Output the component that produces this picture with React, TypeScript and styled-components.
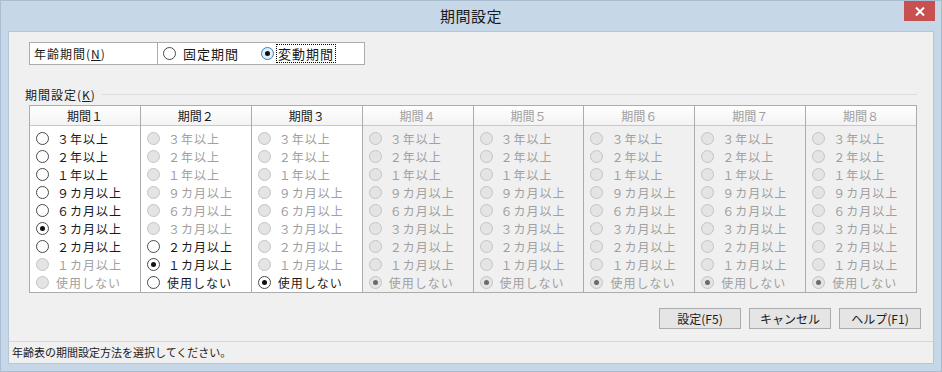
import React from 'react';
import styled, { createGlobalStyle } from 'styled-components';

const GlobalStyle = createGlobalStyle`
  html, body {
    margin: 0;
    padding: 0;
    background: #c6d7e7;
  }

  body {
    font-family: 'Noto Sans CJK JP', 'Noto Sans', sans-serif;
    color: #1a1a1a;
  }
`;

const Window = styled.div`
  display: flex;
  flex-direction: column;
  width: 942px;
  height: 372px;
  box-sizing: border-box;
  background-color: #c6d7e7;
  border: 1px solid #a8bdd2;
`;

const TitleBar = styled.div`
  display: grid;
  grid-template-columns: 1fr auto 1fr;
  height: 30px;
  flex: 0 0 auto;
`;

const Title = styled.div`
  grid-column: 2;
  font-size: 15px;
  line-height: 30px;
  letter-spacing: 0.5px;
`;

const TitleControls = styled.div`
  grid-column: 3;
  display: flex;
  justify-content: flex-end;
  align-items: flex-start;
  padding-right: 6px;
`;

const CloseButton = styled.div`
  display: flex;
  align-items: center;
  justify-content: center;
  width: 31px;
  height: 20px;
  background-color: #c75050;
`;

const Client = styled.div`
  flex: 1 1 auto;
  display: flex;
  flex-direction: column;
  margin: 0 7px 7px 7px;
  background-color: #f0f0f0;
  border: 1px solid #b4c6d8;
`;

const Content = styled.div`
  flex: 1 1 auto;
  display: flex;
  flex-direction: column;
  padding: 10px 16px 0 20px;
`;

const ModeBox = styled.div`
  display: flex;
  width: 336px;
  height: 23px;
  box-sizing: border-box;
  border: 1px solid #acacac;
  background-color: #ffffff;
`;

const ModeLabel = styled.div`
  width: 123px;
  padding-left: 4px;
  border-right: 1px solid #acacac;
  font-size: 12px;
  line-height: 21px;
  letter-spacing: 1px;
`;

const ModeOptions = styled.div`
  display: flex;
  align-items: center;
  padding-left: 5px;
  gap: 21px;
`;

const Option = styled.label<{ $disabled?: boolean; $gap?: number }>`
  display: flex;
  align-items: center;
  gap: ${(p) => p.$gap ?? 6}px;
  color: ${(p) => (p.$disabled ? '#a0a0a0' : '#1a1a1a')};
  white-space: nowrap;
`;

const OptionText = styled.span<{ $focus?: boolean; $size?: number }>`
  font-size: ${(p) => p.$size ?? 12}px;
  line-height: 17px;
  letter-spacing: 1px;
  padding: 0 1px;
  outline: ${(p) => (p.$focus ? '1px dotted #000000' : 'none')};
`;

const RadioMark = styled.span<{ $checked?: boolean; $disabled?: boolean; $focus?: boolean }>`
  position: relative;
  display: inline-block;
  flex: 0 0 auto;
  width: 13px;
  height: 13px;
  box-sizing: border-box;
  border-radius: 50%;
  border: 1px solid
    ${(p) => (p.$focus ? '#3c7fb1' : p.$disabled ? '#c4c4c4' : '#4a4a4a')};
  background-color: ${(p) => (p.$focus ? '#e3eef9' : p.$disabled ? '#e4e4e4' : '#ffffff')};

  &::after {
    content: '';
    display: ${(p) => (p.$checked ? 'block' : 'none')};
    position: absolute;
    left: 3px;
    top: 3px;
    width: 5px;
    height: 5px;
    border-radius: 50%;
    background-color: ${(p) => (p.$disabled ? '#6a6a6a' : '#111111')};
  }
`;

const GroupHeader = styled.div`
  display: flex;
  align-items: center;
  gap: 6px;
  margin: 22px 0 0 -4px;
  height: 15px;
`;

const GroupLabel = styled.span`
  font-size: 12px;
  line-height: 15px;
  letter-spacing: 1px;
`;

const GroupRule = styled.div`
  flex: 1 1 auto;
  height: 1px;
  margin-top: -1px;
  background-color: #dcdcdc;
`;

const Table = styled.div`
  display: flex;
  width: 888px;
  height: 188px;
  box-sizing: border-box;
  margin-top: 3px;
  border: 1px solid #acacac;
`;

const Column = styled.div<{ $disabled?: boolean }>`
  flex: 1 1 0;
  display: flex;
  flex-direction: column;
  border-right: 1px solid #acacac;
  background-color: ${(p) => (p.$disabled ? '#f0f0f0' : '#ffffff')};

  &:last-child {
    border-right: none;
  }
`;

const ColumnHead = styled.div<{ $disabled?: boolean }>`
  height: 19px;
  border-bottom: 1px solid #c8c8c8;
  background: linear-gradient(#ffffff, #f3f3f3);
  text-align: center;
  font-size: 12px;
  line-height: 19px;
  color: ${(p) => (p.$disabled ? '#a0a0a0' : '#1a1a1a')};
`;

const ColumnBody = styled.div`
  display: flex;
  flex-direction: column;
  padding: 3px 0 0 6px;
`;

const Row = styled.div`
  height: 18px;
  display: flex;
  align-items: center;
`;

const ButtonRow = styled.div`
  display: flex;
  justify-content: flex-end;
  gap: 8px;
  margin-top: 15px;
  width: 892px;
`;

const Button = styled.button`
  width: 82px;
  height: 21px;
  padding: 0;
  border: 1px solid #acacac;
  background-color: #e5e5e5;
  font-family: inherit;
  font-size: 12px;
  line-height: 19px;
  color: #1a1a1a;
`;

const StatusBar = styled.div`
  flex: 0 0 auto;
  height: 21px;
  border-top: 1px solid #d7d7d7;
  padding-left: 3px;
  font-size: 11px;
  line-height: 21px;
`;

type State = 'on' | 'off' | 'dis' | 'dison';

const labels = [
  '３年以上',
  '２年以上',
  '１年以上',
  '９カ月以上',
  '６カ月以上',
  '３カ月以上',
  '２カ月以上',
  '１カ月以上',
  '使用しない',
];

const disabledColumn: State[] = ['dis', 'dis', 'dis', 'dis', 'dis', 'dis', 'dis', 'dis', 'dison'];

const periods: { name: string; disabled: boolean; states: State[] }[] = [
  { name: '期間１', disabled: false, states: ['off', 'off', 'off', 'off', 'off', 'on', 'off', 'dis', 'dis'] },
  { name: '期間２', disabled: false, states: ['dis', 'dis', 'dis', 'dis', 'dis', 'dis', 'off', 'on', 'off'] },
  { name: '期間３', disabled: false, states: ['dis', 'dis', 'dis', 'dis', 'dis', 'dis', 'dis', 'dis', 'on'] },
  { name: '期間４', disabled: true, states: disabledColumn },
  { name: '期間５', disabled: true, states: disabledColumn },
  { name: '期間６', disabled: true, states: disabledColumn },
  { name: '期間７', disabled: true, states: disabledColumn },
  { name: '期間８', disabled: true, states: disabledColumn },
];

const PeriodColumn = ({ name, disabled, states }: { name: string; disabled: boolean; states: State[] }) => (
  <Column $disabled={disabled}>
    <ColumnHead $disabled={disabled}>{name}</ColumnHead>
    <ColumnBody>
      {labels.map((label, i) => {
        const s = states[i];
        const off = s === 'dis' || s === 'dison';
        return (
          <Row key={label}>
            <Option $disabled={off} $gap={label === '使用しない' ? 6 : 7}>
              <RadioMark $checked={s === 'on' || s === 'dison'} $disabled={off} />
              <OptionText>{label}</OptionText>
            </Option>
          </Row>
        );
      })}
    </ColumnBody>
  </Column>
);

export default function App() {
  return (
    <>
      <GlobalStyle />
      <Window>
        <TitleBar>
          <Title>期間設定</Title>
          <TitleControls>
            <CloseButton>
              <svg width="10" height="9" viewBox="0 0 10 9">
                <path d="M1 0.5 L9 8.5 M9 0.5 L1 8.5" stroke="#ffffff" strokeWidth="2" />
              </svg>
            </CloseButton>
          </TitleControls>
        </TitleBar>
        <Client>
          <Content>
            <ModeBox>
              <ModeLabel>
                年齢期間(<u>N</u>)
              </ModeLabel>
              <ModeOptions>
                <Option>
                  <RadioMark />
                  <OptionText $size={13}>固定期間</OptionText>
                </Option>
                <Option $gap={3}>
                  <RadioMark $checked $focus />
                  <OptionText $size={13} $focus>
                    変動期間
                  </OptionText>
                </Option>
              </ModeOptions>
            </ModeBox>
            <GroupHeader>
              <GroupLabel>
                期間設定(<u>K</u>)
              </GroupLabel>
              <GroupRule />
            </GroupHeader>
            <Table>
              {periods.map((p) => (
                <PeriodColumn key={p.name} {...p} />
              ))}
            </Table>
            <ButtonRow>
              <Button>設定(F5)</Button>
              <Button>キャンセル</Button>
              <Button>ヘルプ(F1)</Button>
            </ButtonRow>
          </Content>
          <StatusBar>年齢表の期間設定方法を選択してください。</StatusBar>
        </Client>
      </Window>
    </>
  );
}
